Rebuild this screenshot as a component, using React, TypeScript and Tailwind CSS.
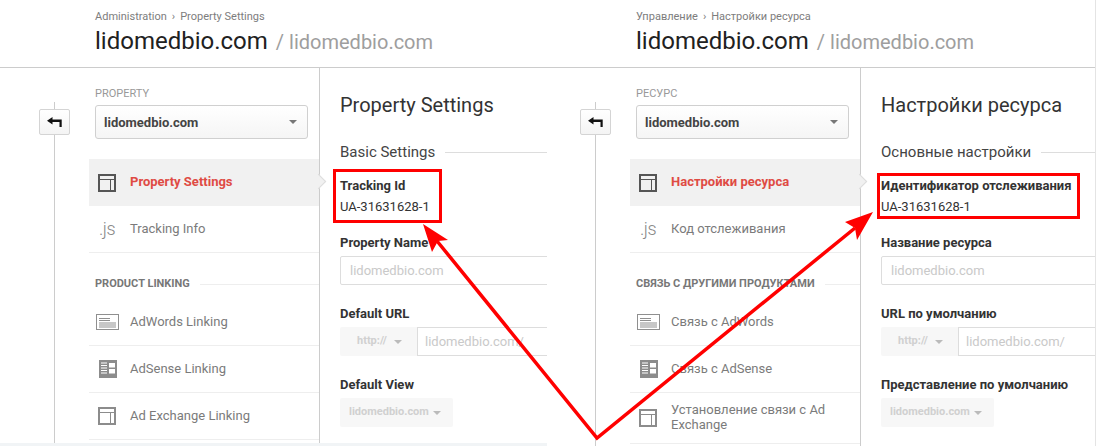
import React from "react";

const Caret = ({ className }: { className: string }) => (
  <svg width="8" height="4" viewBox="0 0 8 4" className={className}>
    <path d="M0 0h8L4 4z" fill="currentColor" />
  </svg>
);

const BackArrow = () => (
  <svg width="15" height="11" viewBox="0 0 15 11">
    <path d="M0 3.7 5.5 0v2.6h9.2v7.4h-2.2V4.9H5.5v2.5z" fill="#111" />
  </svg>
);

const LayoutIcon = ({ color }: { color: string }) => (
  <svg width="18" height="18" viewBox="0 0 18 18" fill="none">
    <rect x="1" y="1" width="16" height="16" stroke={color} strokeWidth="2" />
    <path d="M2 5.5h14M12.5 5.5V16" stroke={color} strokeWidth="1" />
  </svg>
);

const AdWordsIcon = () => (
  <svg width="23" height="16" viewBox="0 0 23 16" fill="none" className="-ml-[2px]">
    <rect x="0.5" y="0.5" width="22" height="15" stroke="#8f8f8f" />
    <path d="M3 4.5h11M3 6.5h11" stroke="#8f8f8f" strokeWidth="1.2" />
    <path d="M3 9h17M3 11h17M3 13h17" stroke="#8f8f8f" />
  </svg>
);

const AdSenseIcon = () => (
  <svg width="18" height="18" viewBox="0 0 18 18">
    <rect width="18" height="18" fill="#8c8c8c" />
    <path d="M2 3h6M2 5.5h6M2 8h6M2 10.5h6M2 13h6" stroke="#fff" strokeWidth="1" />
    <path d="M10 3h6v4.5h-6zM10 9h6v4.5h-6z" fill="#fff" />
  </svg>
);

const JsIcon = () => (
  <span className="w-[33px] pl-[10px] text-[18px] leading-none font-light tracking-tight text-[#8a8a8a]">.js</span>
);

type Labels = {
  crumb1: string;
  crumb2: string;
  section: string;
  settings: string;
  tracking: string;
  linking: string;
  adwords: string;
  adsense: string;
  exchange: React.ReactNode;
  heading: string;
  basic: string;
  trackingId: string;
  name: string;
  url: string;
  view: string;
};

const NavRow = ({ icon, label, tall }: { icon: React.ReactNode; label: React.ReactNode; tall?: boolean }) => (
  <div className={`flex items-center border-b border-[#eeeeee] pl-[9px] text-[13px] leading-[15px] text-[#7b7b7b] ${tall ? "h-[51px]" : "h-[47px]"}`}>
    <div className="flex w-[32px] shrink-0 items-center">{icon}</div>
    <div className="pb-[2px]">{label}</div>
  </div>
);

const Field = ({ label, className, children }: { label: string; className: string; children: React.ReactNode }) => (
  <div className={className}>
    <div className="h-[14px] text-[13px] leading-[16px] font-bold whitespace-nowrap text-[#333333]">{label}</div>
    <div className="mt-[7px] flex">{children}</div>
  </div>
);

const Panel = ({ t, right }: { t: Labels; right?: boolean }) => (
  <div className={right ? "w-[549px] overflow-hidden border-r border-[#e4e4e4]" : "w-[547px] overflow-hidden"}>
    <header className={`h-[68px] border-b border-[#cccccc] pt-[10px] ${right ? "pl-[89px]" : "pl-[95px]"}`}>
      <div className="flex h-[13px] items-center gap-[5px] text-[11px] leading-[13px] text-[#7d7d7d]">
        <span>{t.crumb1}</span>
        <span>›</span>
        <span>{t.crumb2}</span>
      </div>
      <div className="mt-[4px] flex items-baseline whitespace-nowrap">
        <span className="text-[24px] leading-[28px] text-[#212121]">lidomedbio.com</span>
        <span className="ml-[8px] text-[20px] leading-[28px] text-[#9e9e9e]">/ lidomedbio.com</span>
      </div>
    </header>
    <div className={`flex ${right ? "h-[378px]" : "h-[375px]"}`}>
      <div className={`relative shrink-0 pt-[41px] ${right ? "w-[83px] pl-[33px]" : "w-[89px] pl-[39px]"}`}>
        <div className={`absolute top-[34px] bottom-0 w-px bg-[#cccccc] ${right ? "left-[48px]" : "left-[54px]"}`} />
        <div className="relative flex h-[26px] w-[31px] items-center justify-center rounded-[2px] border border-[#d4d4d4] bg-gradient-to-b from-white to-[#f4f4f4]">
          <BackArrow />
        </div>
      </div>
      <aside className="relative w-[231px] shrink-0 border-r border-[#cccccc]">
        <div className="mt-[19px] ml-[6px] text-[11px] leading-[13px] text-[#999999]">{t.section}</div>
        <div className="mt-[5px] ml-[6px] flex h-[34px] w-[213px] items-center justify-between rounded-[3px] border border-[#d0d0d0] bg-gradient-to-b from-white to-[#f5f5f5] pr-[10px] pl-[8px]">
          <span className="pt-[2px] text-[13px] font-bold text-[#444444]">lidomedbio.com</span>
          <Caret className="text-[#777777]" />
        </div>
        <div className="relative mt-[20px] flex h-[47px] items-center bg-[#f1f1f1] pl-[9px] text-[13px] font-bold text-[#df4b44]">
          <div className="flex w-[32px] items-center">
            <LayoutIcon color="#555555" />
          </div>
          <span className="pb-[2px]">{t.settings}</span>
          <div className="absolute top-[17px] right-[-5px] h-[11px] w-[11px] rotate-45 border-t border-r border-[#dddddd] bg-[#f1f1f1]" />
        </div>
        <div className="flex h-[47px] items-center border-b border-[#eeeeee] text-[13px] text-[#7b7b7b]">
          <JsIcon />
          <span className="pl-[8px]">{t.tracking}</span>
        </div>
        <div className="mt-[24px] ml-[6px] flex h-[14px] items-center gap-[10px]">
          <span className="text-[11px] leading-[14px] font-bold whitespace-nowrap text-[#777777]">{t.linking}</span>
          <div className="h-px flex-1 bg-[#eeeeee]" />
        </div>
        <div className="mt-[8px]">
          <NavRow icon={<AdWordsIcon />} label={t.adwords} />
          <NavRow icon={<span className="pl-[1px]"><AdSenseIcon /></span>} label={t.adsense} />
          <NavRow icon={<LayoutIcon color="#8c8c8c" />} label={t.exchange} tall={right} />
        </div>
      </aside>
      <main className="min-w-0 flex-1 overflow-hidden pt-[24px] pl-[20px]">
        <h1 className="text-[20px] leading-[26px] whitespace-nowrap text-[#333333]">{t.heading}</h1>
        <div className="mt-[25px] flex h-[18px] items-center gap-[10px]">
          <span className="text-[15px] leading-[18px] whitespace-nowrap text-[#444444]">{t.basic}</span>
          <div className="h-px flex-1 bg-[#dddddd]" />
        </div>
        <div className="mt-[17px] h-[14px] text-[13px] leading-[16px] font-bold whitespace-nowrap text-[#333333]">{t.trackingId}</div>
        <div className="mt-[7px] h-[14px] text-[13px] leading-[16px] text-[#333333]">UA-31631628-1</div>
        <Field label={t.name} className="mt-[22px]">
          <div className="flex h-[29px] w-[300px] shrink-0 items-center rounded-[2px] border border-[#dddddd] pl-[9px] text-[13px] text-[#c9c9c9]">lidomedbio.com</div>
        </Field>
        <Field label={t.url} className="mt-[21px]">
          <div className="flex h-[29px] w-[77px] shrink-0 items-center gap-[7px] rounded-l-[2px] bg-[#f7f7f7] pl-[17px] text-[11px] font-bold text-[#d0d0d0]">
            <span>http://</span>
            <Caret className="text-[#bbbbbb]" />
          </div>
          <div className="flex h-[29px] w-[300px] shrink-0 items-center border border-[#dddddd] pl-[7px] text-[13px] text-[#c9c9c9]">lidomedbio.com/</div>
        </Field>
        <Field label={t.view} className="mt-[21px]">
          <div className="flex h-[29px] w-[113px] items-center justify-between rounded-[2px] bg-[#f7f7f7] pr-[12px] pl-[9px] text-[11px] font-bold text-[#d0d0d0]">
            <span>lidomedbio.com</span>
            <Caret className="text-[#bbbbbb]" />
          </div>
        </Field>
      </main>
    </div>
    {!right && <div className="h-[3px] bg-[#f1f4f6]" />}
  </div>
);

const en: Labels = {
  crumb1: "Administration",
  crumb2: "Property Settings",
  section: "PROPERTY",
  settings: "Property Settings",
  tracking: "Tracking Info",
  linking: "PRODUCT LINKING",
  adwords: "AdWords Linking",
  adsense: "AdSense Linking",
  exchange: "Ad Exchange Linking",
  heading: "Property Settings",
  basic: "Basic Settings",
  trackingId: "Tracking Id",
  name: "Property Name",
  url: "Default URL",
  view: "Default View",
};

const ru: Labels = {
  crumb1: "Управление",
  crumb2: "Настройки ресурса",
  section: "РЕСУРС",
  settings: "Настройки ресурса",
  tracking: "Код отслеживания",
  linking: "СВЯЗЬ С ДРУГИМИ ПРОДУКТАМИ",
  adwords: "Связь с AdWords",
  adsense: "Связь с AdSense",
  exchange: "Установление связи с Ad Exchange",
  heading: "Настройки ресурса",
  basic: "Основные настройки",
  trackingId: "Идентификатор отслеживания",
  name: "Название ресурса",
  url: "URL по умолчанию",
  view: "Представление по умолчанию",
};

export default function App() {
  return (
    <div className="relative flex h-[446px] w-[1096px] overflow-hidden bg-white font-['Roboto',sans-serif]">
      <Panel t={en} />
      <Panel t={ru} right />
      <svg className="absolute inset-0" width="1096" height="446" viewBox="0 0 1096 446" fill="none">
        <rect x="334.5" y="170.5" width="106" height="51" stroke="#ff0000" strokeWidth="3" />
        <rect x="878.5" y="174.5" width="200" height="43" stroke="#ff0000" strokeWidth="3" />
        <path d="M437 241 597 438 855 228" stroke="#ff0000" strokeWidth="3.5" strokeLinejoin="miter" />
        <path d="M423 224 448 240 438 241 432 252z" fill="#ff0000" />
        <path d="M873 212 845 222 855 228 857 240z" fill="#ff0000" />
      </svg>
    </div>
  );
}
